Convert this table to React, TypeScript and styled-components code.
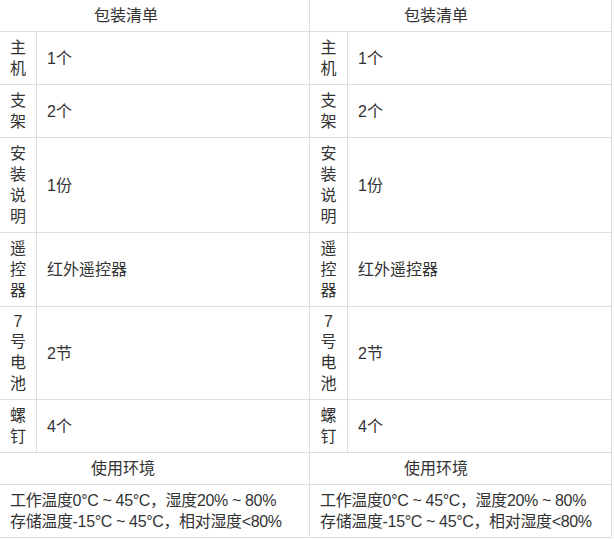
import React from 'react';
import styled, { createGlobalStyle } from 'styled-components';

const Global = createGlobalStyle`
  html, body { margin: 0; padding: 0; background: #fff; }
  body {
    font-family: "Liberation Sans", "Noto Sans CJK SC", sans-serif;
    color: #333;
  }
`;

const Page = styled.div`
  display: flex;
  align-items: flex-start;
`;

const Sheet = styled.div<{ $width: number; $label: number }>`
  display: grid;
  grid-template-columns: ${(p) => p.$label}px 1fr;
  width: ${(p) => p.$width}px;
  font-size: 16px;
  line-height: 21px;
`;

const Cell = styled.div`
  border-right: 1px solid #ddd;
  border-bottom: 1px solid #ddd;
  padding: 5px 0;
  display: flex;
  align-items: center;
`;

const Heading = styled(Cell)<{ $indent: number }>`
  grid-column: 1 / -1;
  padding-left: ${(p) => p.$indent}px;
`;

const Label = styled(Cell)`
  flex-direction: column;
  justify-content: center;
  align-items: center;
`;

const Char = styled.span<{ $narrow: boolean }>`
  display: block;
  line-height: ${(p) => (p.$narrow ? 19 : 21)}px;
`;

const Value = styled(Cell)`
  padding-left: 10px;
`;

const Note = styled(Cell)`
  grid-column: 1 / -1;
  display: block;
  padding: 5px 10px;
  white-space: nowrap;
  letter-spacing: -0.35px;
`;

const items: [string, string][] = [
  ['主机', '1个'],
  ['支架', '2个'],
  ['安装说明', '1份'],
  ['遥控器', '红外遥控器'],
  ['7号电池', '2节'],
  ['螺钉', '4个'],
];

function Table({ width, label, envIndent }: { width: number; label: number; envIndent: number }) {
  return (
    <Sheet $width={width} $label={label}>
      <Heading $indent={94}>包装清单</Heading>
      {items.map(([name, value]) => (
        <React.Fragment key={name}>
          <Label>
            {Array.from(name).map((c, i) => (
              <Char key={i} $narrow={/[\x00-\x7f]/.test(c)}>
                {c}
              </Char>
            ))}
          </Label>
          <Value>{value}</Value>
        </React.Fragment>
      ))}
      <Heading $indent={envIndent}>使用环境</Heading>
      <Note>
        工作温度0°C ~ 45°C，湿度20% ~ 80%
        <br />
        存储温度-15°C ~ 45°C，相对湿度&lt;80%
      </Note>
    </Sheet>
  );
}

export default function App() {
  return (
    <>
      <Global />
      <Page>
        <Table width={310} label={37} envIndent={91} />
        <Table width={302} label={38} envIndent={94} />
      </Page>
    </>
  );
}
